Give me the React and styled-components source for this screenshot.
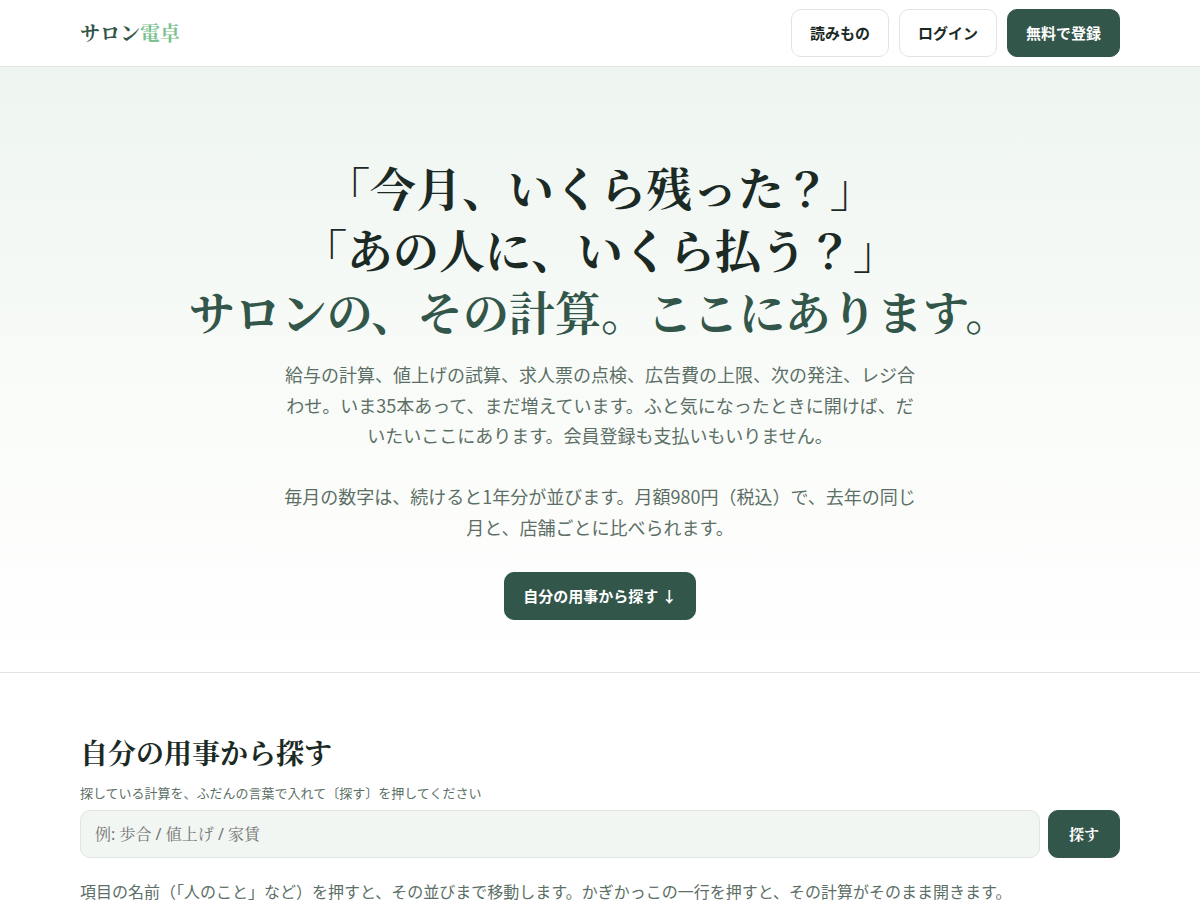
import React from 'react';
import styled, { createGlobalStyle } from 'styled-components';

const sans = '"Noto Sans CJK JP", sans-serif';
const serif = '"Noto Serif CJK JP", "Noto Serif JP", serif';

const App = () => {
  return (
    <>
      <GlobalStyle />
      <Header>
        <Bar>
          <Logo href="/">サロン<span>電卓</span></Logo>
          <Nav>
            <ButtonLink href="/articles">読みもの</ButtonLink>
            <ButtonLink href="/login">ログイン</ButtonLink>
            <ButtonLink href="/signup" $primary>無料で登録</ButtonLink>
          </Nav>
        </Bar>
      </Header>
      <Hero>
        <Title>
          「今月、いくら残った？」<br />
          「あの人に、いくら払う？」<br />
          <span>サロンの、その計算。ここにあります。</span>
        </Title>
        <Lead>
          給与の計算、値上げの試算、求人票の点検、広告費の上限、次の発注、レジ合わせ。いま35本あって、まだ増えています。ふと気になったときに開けば、だいたいここにあります。会員登録も支払いもいりません。
          <br /><br />
          毎月の数字は、続けると1年分が並びます。月額980円（税込）で、去年の同じ月と、店舗ごとに比べられます。
        </Lead>
        <ButtonLink href="#find" $primary>自分の用事から探す ↓</ButtonLink>
      </Hero>
      <Finder id="find">
        <Heading>自分の用事から探す</Heading>
        <Label htmlFor="q">探している計算を、ふだんの言葉で入れて〔探す〕を押してください</Label>
        <SearchForm onSubmit={(e) => e.preventDefault()}>
          <SearchInput id="q" type="search" placeholder="例: 歩合 / 値上げ / 家賃" />
          <SearchButton type="submit">探す</SearchButton>
        </SearchForm>
        <Note>項目の名前（「人のこと」など）を押すと、その並びまで移動します。かぎかっこの一行を押すと、その計算がそのまま開きます。</Note>
      </Finder>
    </>
  );
};

const GlobalStyle = createGlobalStyle`
  * {
    box-sizing: border-box;
  }

  body {
    margin: 0;
    background: #fff;
    color: #1b2a24;
    font-family: ${sans};
    font-size: 16px;
    line-height: 1.7;
  }
`;

const Header = styled.header`
  border-bottom: 1px solid #e0e5e2;
  background: #fff;
`;

const Bar = styled.div`
  display: flex;
  align-items: center;
  justify-content: space-between;
  max-width: 1088px;
  min-height: 66px;
  margin: 0 auto;
  padding: 0 24px;
`;

const Logo = styled.a`
  color: #33564a;
  font-family: ${serif};
  font-size: 20px;
  font-weight: 700;
  text-decoration: none;

  span {
    color: #7cc290;
  }
`;

const Nav = styled.nav`
  display: flex;
  gap: 10px;
`;

const ButtonLink = styled.a`
  display: inline-flex;
  align-items: center;
  justify-content: center;
  min-height: 48px;
  padding: 0 18px;
  border: 1px solid ${(p) => (p.$primary ? '#33564a' : '#e0e5e2')};
  border-radius: 10px;
  background: ${(p) => (p.$primary ? '#33564a' : '#fff')};
  color: ${(p) => (p.$primary ? '#fff' : '#1b2a24')};
  font-size: 15px;
  font-weight: 700;
  text-decoration: none;
`;

const Hero = styled.section`
  padding: 88px 24px 52px;
  border-bottom: 1px solid #e0e5e2;
  background: linear-gradient(180deg, #eef5f1 0%, #fafcf9 60%, #fff 100%);
  text-align: center;
`;

const Title = styled.h1`
  margin: 0 0 18px;
  font-family: ${serif};
  font-size: 46px;
  font-weight: 700;
  line-height: 62px;

  span {
    color: #33564a;
  }
`;

const Lead = styled.p`
  max-width: 640px;
  margin: 0 auto 29px;
  color: #5c6f66;
  font-size: 18px;
  line-height: 1.7;
`;

const Finder = styled.section`
  max-width: 1088px;
  margin: 0 auto;
  padding: 56px 24px;
`;

const Heading = styled.h2`
  margin: 0 0 8px;
  font-family: ${serif};
  font-size: 28px;
  font-weight: 700;
  line-height: 46px;
`;

const Label = styled.label`
  display: block;
  margin-bottom: 7px;
  color: #5c6f66;
  font-size: 13px;
  line-height: 20px;
`;

const SearchForm = styled.form`
  display: flex;
  gap: 8px;
`;

const SearchInput = styled.input`
  flex: 1;
  min-width: 0;
  height: 48px;
  padding: 0 14px;
  border: 1px solid #dfe6e2;
  border-radius: 10px;
  background: #f1f6f2;
  color: #1b2a24;
  font-family: "Noto Sans", ${serif};
  font-size: 16px;
`;

const SearchButton = styled.button`
  min-height: 48px;
  padding: 0 20px;
  border: 1px solid #33564a;
  border-radius: 10px;
  background: #33564a;
  color: #fff;
  font-family: ${serif};
  font-size: 15px;
  font-weight: 700;
`;

const Note = styled.p`
  margin: 20px 0 0;
  color: #5c6f66;
  font-size: 16px;
`;

export default App;
